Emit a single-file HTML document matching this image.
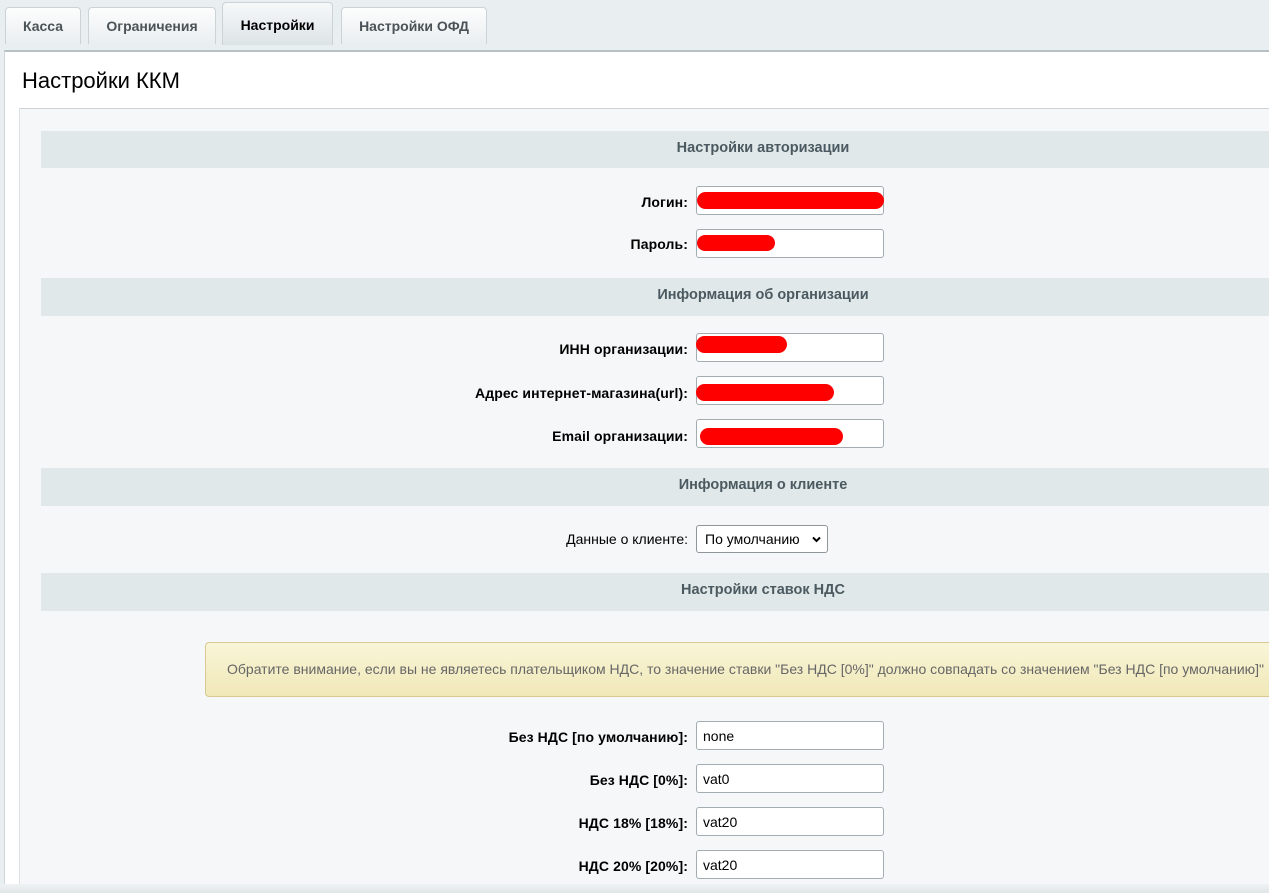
<!DOCTYPE html>
<html><head><meta charset="utf-8"><style>
*{box-sizing:border-box;margin:0;padding:0}
body{width:1269px;height:893px;overflow:hidden;background:#e9eef0;font-family:"Liberation Sans",Arial,sans-serif;position:relative}
.a{position:absolute}
.tab{position:absolute;top:7px;height:37px;border:1px solid #ccd3d6;border-bottom:none;border-radius:4px 4px 0 0;background:linear-gradient(#fdfdfd,#e9eef0);font-size:14px;font-weight:bold;color:#4b5358;text-align:center;line-height:36px}
.hdr{position:absolute;left:41px;width:1228px;height:37px;background:#e0e8ea;color:#4b5a60;font-size:14.5px;font-weight:bold;text-align:center;line-height:35px;padding-left:216px}
.lbl{position:absolute;right:581px;font-size:14px;font-weight:bold;color:#000;text-align:right;letter-spacing:0.1px}
.inp{position:absolute;left:696px;width:188px;height:29px;background:#fff;border:1px solid #a3acb1;border-radius:3px;font-size:14px;color:#000;padding:6px 6px;overflow:hidden}
.red{position:absolute;background:#ff0000;border-radius:9px}
</style></head><body>
<div class="tab" style="left:5px;width:76px">Касса</div>
<div class="tab" style="left:88px;width:128px">Ограничения</div>
<div class="tab" style="left:222px;width:111px;top:2px;height:43px;color:#000;background:linear-gradient(#f6f8f9,#dde4e7);line-height:44px">Настройки</div>
<div class="tab" style="left:341px;width:146px">Настройки ОФД</div>
<div class="a" style="left:4px;top:50px;width:1265px;height:843px;background:#fff;border-top:2px solid #b7c0c4;border-left:1px solid #d0d6d9"></div>
<div class="a" style="left:22px;top:68px;font-size:22px;color:#000">Настройки ККМ</div>
<div class="a" style="left:19px;top:108px;width:1250px;height:785px;background:#f5f7f8;border-top:1px solid #cdd4d7;border-left:1px solid #dde2e4"></div>

<div class="hdr" style="top:131px">Настройки авторизации</div>
<div class="lbl" style="top:194px">Логин:</div>
<div class="inp" style="top:186px"></div><div class="red" style="left:697px;top:192px;width:187px;height:17px"></div>
<div class="lbl" style="top:236px">Пароль:</div>
<div class="inp" style="top:229px"></div><div class="red" style="left:697px;top:235px;width:78px;height:16px"></div>

<div class="hdr" style="top:278px;height:38px">Информация об организации</div>
<div class="lbl" style="top:341px">ИНН организации:</div>
<div class="inp" style="top:333px"></div><div class="red" style="left:696px;top:336px;width:91px;height:17px"></div>
<div class="lbl" style="top:385px">Адрес интернет-магазина(url):</div>
<div class="inp" style="top:376px"></div><div class="red" style="left:696px;top:384px;width:138px;height:17px"></div>
<div class="lbl" style="top:428px">Email организации:</div>
<div class="inp" style="top:419px"></div><div class="red" style="left:700px;top:428px;width:143px;height:17px"></div>

<div class="hdr" style="top:468px;height:38px">Информация о клиенте</div>
<div class="a" style="right:581px;top:531px;font-size:14px;color:#000">Данные о клиенте:</div>
<div class="a" style="left:696px;top:525px;width:132px;height:28px;background:#fff;border:1px solid #8f969a;border-radius:3px;font-size:14px;padding:5px 8px;color:#000">По умолчанию
<svg style="position:absolute;right:6px;top:10px" width="9" height="7" viewBox="0 0 9 7"><path d="M1 1.5L4.5 5L8 1.5" fill="none" stroke="#000" stroke-width="2"/></svg></div>

<div class="hdr" style="top:573px;height:38px">Настройки ставок НДС</div>
<div class="a" style="left:205px;top:642px;width:1080px;height:55px;background:linear-gradient(#f9f5d8,#f0e8b8);border:1px solid #d7c991;border-radius:4px;font-size:14px;color:#666;padding:18px 0 0 21px;white-space:nowrap">Обратите внимание, если вы не являетесь плательщиком НДС, то значение ставки "Без НДС [0%]" должно совпадать со значением "Без НДС [по умолчанию]"</div>

<div class="lbl" style="top:729px">Без НДС [по умолчанию]:</div><div class="inp" style="top:721px">none</div>
<div class="lbl" style="top:772px">Без НДС [0%]:</div><div class="inp" style="top:764px">vat0</div>
<div class="lbl" style="top:815px">НДС 18% [18%]:</div><div class="inp" style="top:807px">vat20</div>
<div class="lbl" style="top:858px">НДС 20% [20%]:</div><div class="inp" style="top:850px">vat20</div>
<div class="a" style="left:0;top:884px;width:1269px;height:9px;background:linear-gradient(#f0f3f4,#dfe5e7)"></div>
</body></html>
